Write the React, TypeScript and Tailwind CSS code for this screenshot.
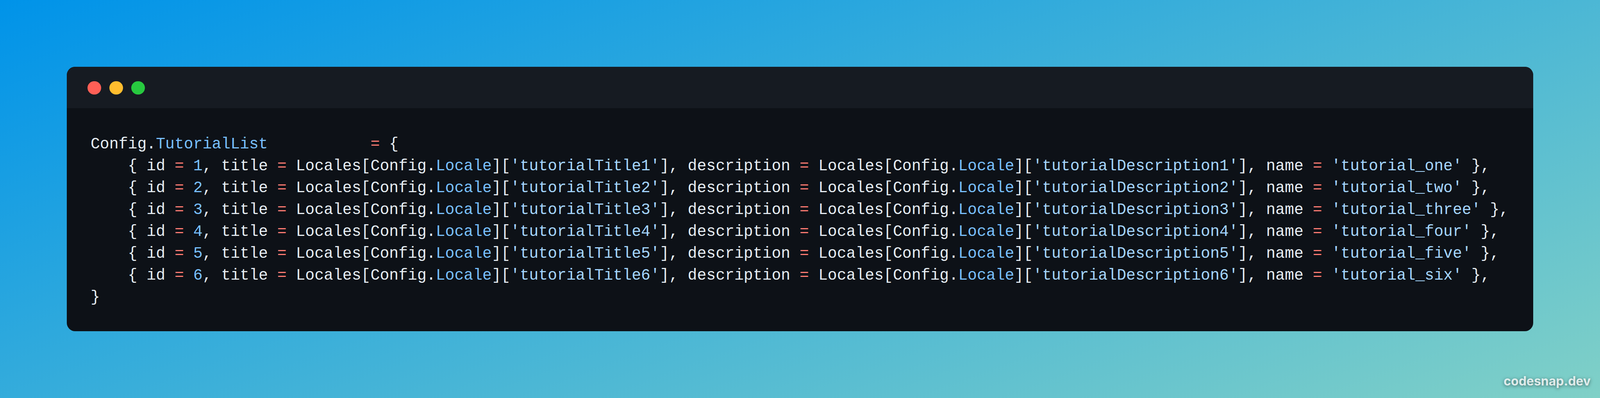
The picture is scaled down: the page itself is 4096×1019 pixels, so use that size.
const PAD = '    '

type Tok = [string, string?]

const blue = 'text-[#79c0ff]'
const str = 'text-[#a5d6ff]'
const red = 'text-[#ff7b72]'

function tutorialLine(n: number, name: string): Tok[] {
  return [
    [PAD + '{ id '],
    ['=', red],
    [' '],
    [String(n), blue],
    [', title '],
    ['=', red],
    [' Locales[Config.'],
    ['Locale', blue],
    [']['],
    [`'tutorialTitle${n}'`, str],
    ['], description '],
    ['=', red],
    [' Locales[Config.'],
    ['Locale', blue],
    [']['],
    [`'tutorialDescription${n}'`, str],
    ['], name '],
    ['=', red],
    [' '],
    [`'tutorial_${name}'`, str],
    [' },'],
  ]
}

const lines: Tok[][] = [
  [['Config.'], ['TutorialList', blue], ['           '], ['=', red], [' {']],
  tutorialLine(1, 'one'),
  tutorialLine(2, 'two'),
  tutorialLine(3, 'three'),
  tutorialLine(4, 'four'),
  tutorialLine(5, 'five'),
  tutorialLine(6, 'six'),
  [['}']],
]

export default function App() {
  return (
    <div className="relative w-[4096px] h-[1019px] overflow-hidden p-[170.67px] bg-[linear-gradient(160deg,#0093e9,#80d0c7)]">
      <div className="h-full rounded-[21.33px] overflow-hidden bg-[#0d1117] flex flex-col">
        <div className="h-[106.67px] shrink-0 bg-[#161b22] flex items-center gap-[21.33px] pl-[53.33px] pt-[2px]">
          <div className="w-[34.67px] h-[34.67px] rounded-full bg-[#ff5f56]" />
          <div className="w-[34.67px] h-[34.67px] rounded-full bg-[#ffbd2e]" />
          <div className="w-[34.67px] h-[34.67px] rounded-full bg-[#27c93f]" />
        </div>
        <div className="flex-1 pl-[61.33px] pt-[65px] font-['Liberation_Mono',monospace] text-[39.8px] leading-[56px] text-[#e6edf3] whitespace-pre">
          {lines.map((line, i) => (
            <div key={i} className="h-[56px]">
              {line.map(([text, color], j) => (
                <span key={j} className={color}>{text}</span>
              ))}
            </div>
          ))}
        </div>
      </div>
      <div className="absolute right-[24px] bottom-[27px] font-['Inter',sans-serif] font-bold text-[32px] leading-none text-white/80 [text-shadow:0_2px_8px_rgba(0,0,0,0.5)]">
        codesnap.dev
      </div>
    </div>
  )
}
